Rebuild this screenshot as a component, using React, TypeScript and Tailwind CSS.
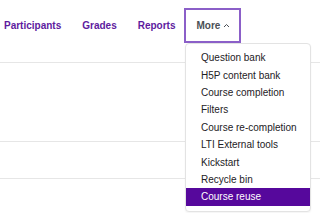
const MORE_ITEMS = [
  "Question bank",
  "H5P content bank",
  "Course completion",
  "Filters",
  "Course re-completion",
  "LTI External tools",
  "Kickstart",
  "Recycle bin",
  "Course reuse",
];

export default function App() {
  return (
    <div className="relative h-[213px] w-[320px] overflow-hidden bg-white font-['Liberation_Sans',Arial,sans-serif]">
      <nav className="flex h-[63px] items-start border-b border-[#e6e6e6] pl-1 pt-2">
        <div className="flex h-[35px] items-center gap-[21px] text-[10px] font-bold text-[#5e1a9e]">
          <a>Participants</a>
          <a>Grades</a>
          <a>Reports</a>
        </div>
        <div className="relative ml-2 flex h-[35px] w-[57px] items-center gap-[3px] border-2 border-[#8b5fc8] pl-[11px] text-[10px] font-bold text-[#4a4f55]">
          <span>More</span>
          <svg width="7" height="5" viewBox="0 0 7 5" fill="none" aria-hidden="true">
            <path d="M1 4 L3.5 1.5 L6 4" stroke="#4a4f55" strokeWidth="1" />
          </svg>
        </div>
      </nav>
      <div className="h-[79px] border-b border-[#e6e6e6]" />
      <div className="h-[37px] border-b border-[#e6e6e6]" />

      <ul className="absolute left-[185px] top-[43px] w-[126px] rounded-[4px] border border-[#e3e3e3] bg-white py-[5px] text-[10px] text-[#1d2125] shadow-[0_1px_2px_rgba(0,0,0,0.05)]">
        {MORE_ITEMS.map((item) => (
          <li
            key={item}
            className={
              item === "Course reuse"
                ? "flex h-[17.4px] items-center bg-[#56089c] pl-[15px] text-white"
                : "flex h-[17.4px] items-center pl-[15px]"
            }
          >
            {item}
          </li>
        ))}
      </ul>
    </div>
  );
}
